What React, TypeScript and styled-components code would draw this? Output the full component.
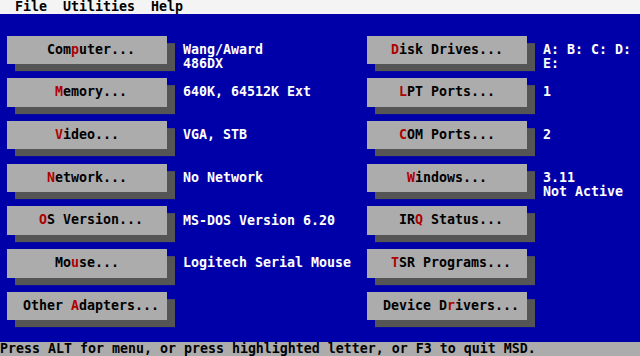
import React from "react";
import styled, { createGlobalStyle } from "styled-components";

const ROW = 14.24;

const GlobalStyle = createGlobalStyle`
  html, body {
    margin: 0;
    padding: 0;
    background: #0000a8;
  }
  body {
    font-family: "DejaVu Sans Mono", "Liberation Mono", monospace;
    font-size: 13.29px;
    font-weight: bold;
    line-height: ${ROW}px;
  }
`;

const Screen = styled.div`
  width: 640px;
  height: 356px;
  display: flex;
  flex-direction: column;
  background: #0000a8;
  overflow: hidden;
  white-space: pre;
`;

const MenuBar = styled.div`
  height: ${ROW}px;
  display: flex;
  gap: 16px;
  padding-left: 15px;
  background: #f4f4f4;
  color: #000;
`;

const Main = styled.div`
  flex: 1;
  display: grid;
  grid-template-columns: 360px 280px;
  grid-template-rows: repeat(7, ${ROW * 3}px);
  grid-auto-flow: column;
  padding-top: ${ROW}px;
`;

const Item = styled.div`
  display: flex;
  align-items: flex-start;
  padding: ${ROW / 2}px 0 0 7px;
`;

const Button = styled.div<{ $indent: number }>`
  flex: none;
  width: 160px;
  height: ${ROW * 2}px;
  line-height: ${ROW * 2}px;
  padding-left: ${(p) => p.$indent}px;
  box-sizing: border-box;
  background: #acacac;
  color: #000;
  box-shadow: 8px ${ROW / 2}px 0 #555555;
`;

const Hot = styled.span`
  color: #b00000;
`;

const Value = styled.div<{ $width: number }>`
  width: ${(p) => p.$width}px;
  margin: ${ROW / 2}px 0 0 16px;
  color: #ffffff;
  white-space: pre-wrap;
`;

const StatusBar = styled.div`
  height: ${ROW}px;
  background: #acacac;
  color: #000;
`;

type Entry = { label: string; hot: number; value: string };

const left: Entry[] = [
  { label: "Computer...", hot: 3, value: "Wang/Award\n486DX" },
  { label: "Memory...", hot: 0, value: "640K, 64512K Ext" },
  { label: "Video...", hot: 0, value: "VGA, STB" },
  { label: "Network...", hot: 0, value: "No Network" },
  { label: "OS Version...", hot: 0, value: "MS-DOS Version 6.20" },
  { label: "Mouse...", hot: 2, value: "Logitech Serial Mouse" },
  { label: "Other Adapters...", hot: 6, value: "" },
];

const right: Entry[] = [
  { label: "Disk Drives...", hot: 0, value: "A: B: C: D: E:" },
  { label: "LPT Ports...", hot: 0, value: "1" },
  { label: "COM Ports...", hot: 0, value: "2" },
  { label: "Windows...", hot: 0, value: "3.11\nNot Active" },
  { label: "IRQ Status...", hot: 2, value: "" },
  { label: "TSR Programs...", hot: 0, value: "" },
  { label: "Device Drivers...", hot: 8, value: "" },
];

const Cell: React.FC<{ entry: Entry; valueWidth: number }> = ({
  entry,
  valueWidth,
}) => {
  const { label, hot, value } = entry;
  const indent = Math.floor((21 - label.length) / 2) * 8;
  return (
    <Item>
      <Button $indent={indent}>
        {label.slice(0, hot)}
        <Hot>{label[hot]}</Hot>
        {label.slice(hot + 1)}
      </Button>
      <Value $width={valueWidth}>{value}</Value>
    </Item>
  );
};

export default function App() {
  return (
    <>
      <GlobalStyle />
      <Screen>
        <MenuBar>
          <span>File</span>
          <span>Utilities</span>
          <span>Help</span>
        </MenuBar>
        <Main>
          {left.map((e) => (
            <Cell key={e.label} entry={e} valueWidth={176} />
          ))}
          {right.map((e) => (
            <Cell key={e.label} entry={e} valueWidth={96} />
          ))}
        </Main>
        <StatusBar>
          Press ALT for menu, or press highlighted letter, or F3 to quit MSD.
        </StatusBar>
      </Screen>
    </>
  );
}
